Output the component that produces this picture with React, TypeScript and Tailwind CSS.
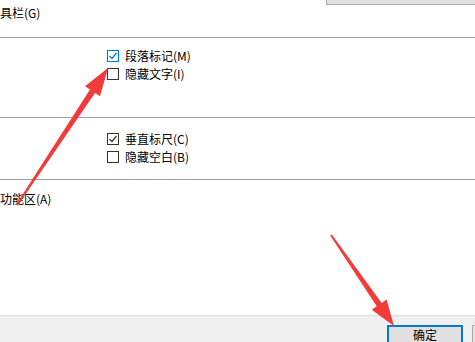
import React from "react";

const font = { fontFamily: '"SimSun","Noto Sans CJK SC","DejaVu Sans",sans-serif' };

function Box({ checked, blue }: { checked?: boolean; blue?: boolean }) {
  return (
    <div
      className={
        "w-[12px] h-[12px] border bg-white flex items-center justify-center " +
        (blue ? "border-[#0078d7]" : "border-[#333333]")
      }
    >
      {checked && (
        <svg width="10" height="10" viewBox="0 0 10 10">
          <path d="M1.5 5 L4 7.5 L8.5 2" fill="none" stroke={blue ? "#0078d7" : "#333333"} strokeWidth="1.2" />
        </svg>
      )}
    </div>
  );
}

function Row({ label, checked, blue }: { label: string; checked?: boolean; blue?: boolean }) {
  return (
    <div className="flex items-center gap-[6px] h-[18px]">
      <Box checked={checked} blue={blue} />
      <span className="text-[12px] leading-[14px] text-black">{label}</span>
    </div>
  );
}

export default function App() {
  return (
    <div className="relative w-[475px] h-[342px] overflow-hidden bg-white flex flex-col" style={font}>
      <div className="h-[37px] flex justify-between">
        <div className="pt-[6px] text-[12px] leading-[14px] text-black">具栏(G)</div>
        <div className="w-[149px] h-[5px] bg-[#e1e1e1] border-l border-b border-[#adadad]" />
      </div>
      <div className="h-px bg-[#a0a0a0]" />
      <div className="h-[79px] pl-[107px] pt-[9px] flex flex-col">
        <Row label="段落标记(M)" checked blue />
        <Row label="隐藏文字(I)" />
      </div>
      <div className="h-px bg-[#a0a0a0]" />
      <div className="h-[61px] pl-[107px] pt-[12px] flex flex-col">
        <Row label="垂直标尺(C)" checked />
        <Row label="隐藏空白(B)" />
      </div>
      <div className="h-px bg-[#a0a0a0]" />
      <div className="flex-1 pt-[12px] text-[12px] leading-[14px] text-black">功能区(A)</div>
      <div className="h-[27px] shrink-0 bg-[#f0f0f0] border-t border-[#dfdfdf] flex items-start pt-[9px] pl-[387px] gap-[9px]">
        <div className="w-[76px] h-[24px] shrink-0 border-2 border-[#0078d7] bg-[#e1e1e1] flex justify-center pt-[1px] text-[12px] leading-[14px] text-black">
          确定
        </div>
        <div className="w-[76px] h-[24px] shrink-0 border border-[#adadad] bg-[#e1e1e1]" />
      </div>
      <svg className="absolute left-0 top-0 pointer-events-none" width="475" height="342" viewBox="0 0 475 342">
        <polygon
          points="16.2,204.4 90,89.6 85,86.3 108,68 100,96.3 95,93 17.8,205.6"
          fill="#f23a3a"
        />
        <polygon
          points="330.2,235.6 376.7,306.3 371.8,309.7 394,326 386.6,299.5 381.7,302.9 331.8,234.4"
          fill="#f23a3a"
        />
      </svg>
    </div>
  );
}
